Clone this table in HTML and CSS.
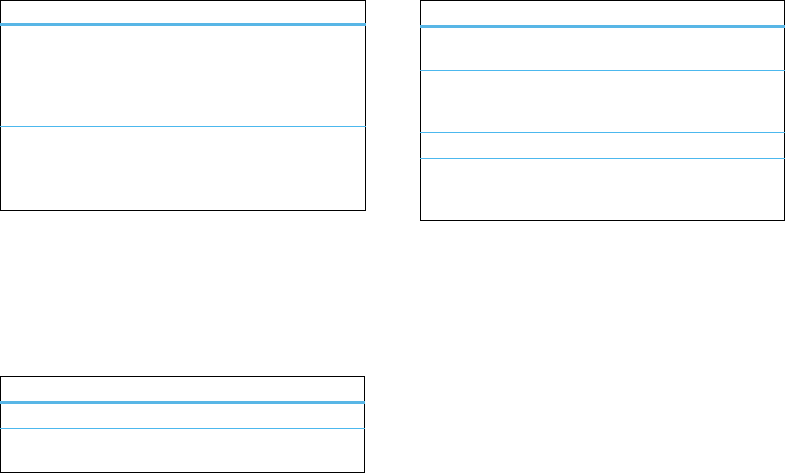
FILE: index.html
```html
<!DOCTYPE html>
<html lang="en">
<head>
    <meta charset="UTF-8">
    <title>Tables</title>
    <link rel="stylesheet" href="styles.css">
</head>
<body>
    <div class="page">
        <!-- Left column -->
        <div class="column left">
            <div class="box box-a">
                <div class="head"></div>
                <div class="row h100"></div>
                <div class="row h83"></div>
            </div>

            <div class="box box-c">
                <div class="head"></div>
                <div class="row h24"></div>
                <div class="row h43"></div>
            </div>
        </div>

        <!-- Right column -->
        <div class="column right">
            <div class="box box-b">
                <div class="head tall"></div>
                <div class="row h42"></div>
                <div class="row h61"></div>
                <div class="row h25"></div>
                <div class="row h61"></div>
            </div>
        </div>
    </div>
</body>
</html>
```

FILE: styles.css
```css
body {
    margin: 0;
    padding: 0;
    background: #fff;
    font-family: "Liberation Sans", Arial, sans-serif;
}
.page {
    display: flex;
    gap: 54px;
    align-items: flex-start;
}
.column {
    display: flex;
    flex-direction: column;
}
.left {
    width: 366px;
}
.right {
    width: 365px;
}
.box {
    border: 1px solid #000;
    display: flex;
    flex-direction: column;
}
.box-c {
    width: 363px;
    margin-top: 165px;
}
.head {
    height: 22px;
    margin: 0 -1px;
    border-bottom: 3px solid #58b6e6;
}
.head.tall,
.box-c .head {
    height: 24px;
}
.row {
    margin: 0 -1px;
    border-bottom: 1px solid #4cb8ee;
}
.row:last-child {
    border-bottom: none;
}
.h24 { height: 24px; }
.h25 { height: 25px; }
.h42 { height: 42px; }
.h43 { height: 43px; }
.h61 { height: 61px; }
.h83 { height: 83px; }
.h100 { height: 100px; }
```
